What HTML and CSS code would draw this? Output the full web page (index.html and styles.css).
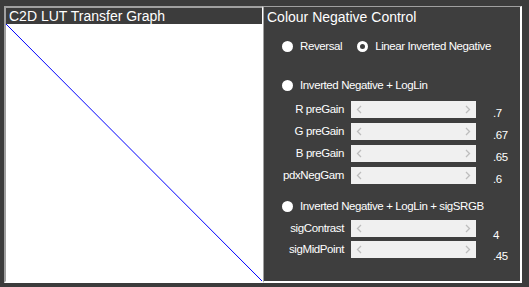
FILE: index.html
```html
<!DOCTYPE html>
<html lang="en">
<head>
    <meta charset="UTF-8">
    <meta name="viewport" content="width=device-width, initial-scale=1.0">
    <title>Colour Negative Control</title>
    <link rel="stylesheet" href="styles.css">
</head>

<body>
    <div class="window">
        <!-- LUT graph panel -->
        <div class="panel graph-panel">
            <div class="panel-title">C2D LUT Transfer Graph</div>
            <div class="graph">
                <svg width="100%" height="100%" viewBox="0 0 100 100" preserveAspectRatio="none">
                    <line x1="0" y1="0" x2="100" y2="100" stroke="#0000ff" stroke-width="1" vector-effect="non-scaling-stroke"/>
                </svg>
            </div>
        </div>

        <!-- Controls panel -->
        <div class="panel control-panel">
            <div class="panel-title control-title">Colour Negative Control</div>

            <div class="radio-row first-row">
                <label class="radio"><span class="dot"></span>Reversal</label>
                <label class="radio"><span class="dot checked"></span>Linear Inverted Negative</label>
            </div>

            <div class="radio-row loglin-row">
                <label class="radio"><span class="dot"></span>Inverted Negative + LogLin</label>
            </div>

            <div class="slider-grid gain-grid">
                <span class="slider-label">R preGain</span>
                <div class="slider">
                    <svg width="6" height="9" viewBox="0 0 6 9"><polyline points="5,1 1.5,4.5 5,8" fill="none" stroke="#bdbdbd" stroke-width="1.3"/></svg>
                    <svg width="6" height="9" viewBox="0 0 6 9"><polyline points="1,1 4.5,4.5 1,8" fill="none" stroke="#bdbdbd" stroke-width="1.3"/></svg>
                </div>
                <span class="slider-value">.7</span>

                <span class="slider-label">G preGain</span>
                <div class="slider">
                    <svg width="6" height="9" viewBox="0 0 6 9"><polyline points="5,1 1.5,4.5 5,8" fill="none" stroke="#bdbdbd" stroke-width="1.3"/></svg>
                    <svg width="6" height="9" viewBox="0 0 6 9"><polyline points="1,1 4.5,4.5 1,8" fill="none" stroke="#bdbdbd" stroke-width="1.3"/></svg>
                </div>
                <span class="slider-value">.67</span>

                <span class="slider-label">B preGain</span>
                <div class="slider">
                    <svg width="6" height="9" viewBox="0 0 6 9"><polyline points="5,1 1.5,4.5 5,8" fill="none" stroke="#bdbdbd" stroke-width="1.3"/></svg>
                    <svg width="6" height="9" viewBox="0 0 6 9"><polyline points="1,1 4.5,4.5 1,8" fill="none" stroke="#bdbdbd" stroke-width="1.3"/></svg>
                </div>
                <span class="slider-value">.65</span>

                <span class="slider-label">pdxNegGam</span>
                <div class="slider">
                    <svg width="6" height="9" viewBox="0 0 6 9"><polyline points="5,1 1.5,4.5 5,8" fill="none" stroke="#bdbdbd" stroke-width="1.3"/></svg>
                    <svg width="6" height="9" viewBox="0 0 6 9"><polyline points="1,1 4.5,4.5 1,8" fill="none" stroke="#bdbdbd" stroke-width="1.3"/></svg>
                </div>
                <span class="slider-value">.6</span>
            </div>

            <div class="radio-row sig-row">
                <label class="radio"><span class="dot"></span>Inverted Negative + LogLin + sigSRGB</label>
            </div>

            <div class="slider-grid sig-grid">
                <span class="slider-label">sigContrast</span>
                <div class="slider">
                    <svg width="6" height="9" viewBox="0 0 6 9"><polyline points="5,1 1.5,4.5 5,8" fill="none" stroke="#bdbdbd" stroke-width="1.3"/></svg>
                    <svg width="6" height="9" viewBox="0 0 6 9"><polyline points="1,1 4.5,4.5 1,8" fill="none" stroke="#bdbdbd" stroke-width="1.3"/></svg>
                </div>
                <span class="slider-value">4</span>

                <span class="slider-label">sigMidPoint</span>
                <div class="slider">
                    <svg width="6" height="9" viewBox="0 0 6 9"><polyline points="5,1 1.5,4.5 5,8" fill="none" stroke="#bdbdbd" stroke-width="1.3"/></svg>
                    <svg width="6" height="9" viewBox="0 0 6 9"><polyline points="1,1 4.5,4.5 1,8" fill="none" stroke="#bdbdbd" stroke-width="1.3"/></svg>
                </div>
                <span class="slider-value">.45</span>
            </div>
        </div>
    </div>
</body>
</html>
```

FILE: styles.css
```css
/* Dark form background */
body {
    margin: 0;
    background-color: #3c3c3c;
    font-family: 'Liberation Sans', Arial, sans-serif;
    color: #ffffff;
}

.window {
    display: flex;
    padding: 6px 0 0 4px;
}

/* Sunken group boxes */
.panel {
    box-sizing: border-box;
    height: 277px;
    width: 259px;
    border-style: solid;
    border-color: #a0a0a0 #ffffff #ffffff #a0a0a0;
}

.graph-panel {
    display: flex;
    flex-direction: column;
    border-width: 2px 1px 2px 2px;
}

.panel-title {
    font-size: 14px;
    line-height: 16px;
    height: 16px;
    padding-left: 3px;
    white-space: nowrap;
}

.graph {
    flex: 1;
    background-color: #ffffff;
}

.graph svg {
    display: block;
}

.control-panel {
    border-width: 1px 2px 2px 1px;
    background-color: #3e3e3e;
    padding-left: 2px;
}

.control-title {
    padding-left: 1px;
    padding-top: 2px;
    line-height: 17px;
    height: 17px;
}

/* Radio buttons */
.radio-row {
    display: flex;
    gap: 15px;
    padding-left: 16px;
    height: 16px;
    align-items: center;
}

.first-row {
    margin-top: 12px;
}

.loglin-row {
    margin-top: 23px;
}

.sig-row {
    margin-top: 14px;
}

.radio {
    display: flex;
    align-items: center;
    gap: 7px;
    font-size: 11.5px;
    letter-spacing: -0.4px;
    white-space: nowrap;
}

.dot {
    box-sizing: border-box;
    width: 11px;
    height: 11px;
    border-radius: 50%;
    background-color: #ffffff;
}

.dot.checked {
    background-color: #3e3e3e;
    border: 3px solid #ffffff;
}

/* Scroll bar sliders */
.slider-grid {
    display: grid;
    grid-template-columns: 78px 125px auto;
    grid-auto-rows: 17px;
    column-gap: 7px;
    row-gap: 5px;
    font-size: 11.5px;
    letter-spacing: -0.4px;
}

.gain-grid {
    margin-top: 8px;
}

.sig-grid {
    margin-top: 6px;
    row-gap: 4px;
}

.slider-label {
    text-align: right;
    line-height: 17px;
    white-space: nowrap;
}

.slider {
    display: flex;
    justify-content: space-between;
    align-items: center;
    padding: 0 5px;
    background-color: #f0f0f0;
}

/* values sit a little below their slider */
.slider-value {
    padding: 4px 0 0 10px;
    line-height: 17px;
    white-space: nowrap;
}

.sig-grid .slider-value {
    padding-top: 7px;
}
```
